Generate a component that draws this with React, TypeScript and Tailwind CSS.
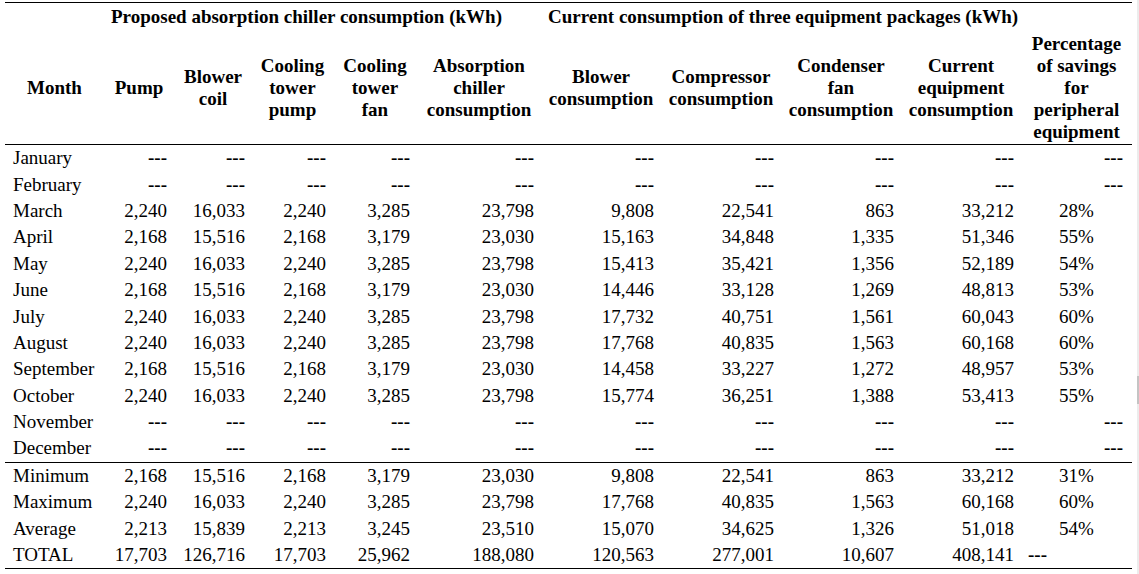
const cols = "grid grid-cols-[99px_70px_78px_81px_84px_124px_120px_120px_120px_120px_111px]";

type Row = { label: string; values: string[] | null };

const months: Row[] = [
  { label: "January", values: null },
  { label: "February", values: null },
  { label: "March", values: ["2,240", "16,033", "2,240", "3,285", "23,798", "9,808", "22,541", "863", "33,212", "28%"] },
  { label: "April", values: ["2,168", "15,516", "2,168", "3,179", "23,030", "15,163", "34,848", "1,335", "51,346", "55%"] },
  { label: "May", values: ["2,240", "16,033", "2,240", "3,285", "23,798", "15,413", "35,421", "1,356", "52,189", "54%"] },
  { label: "June", values: ["2,168", "15,516", "2,168", "3,179", "23,030", "14,446", "33,128", "1,269", "48,813", "53%"] },
  { label: "July", values: ["2,240", "16,033", "2,240", "3,285", "23,798", "17,732", "40,751", "1,561", "60,043", "60%"] },
  { label: "August", values: ["2,240", "16,033", "2,240", "3,285", "23,798", "17,768", "40,835", "1,563", "60,168", "60%"] },
  { label: "September", values: ["2,168", "15,516", "2,168", "3,179", "23,030", "14,458", "33,227", "1,272", "48,957", "53%"] },
  { label: "October", values: ["2,240", "16,033", "2,240", "3,285", "23,798", "15,774", "36,251", "1,388", "53,413", "55%"] },
  { label: "November", values: null },
  { label: "December", values: null }
];

const summary: Row[] = [
  { label: "Minimum", values: ["2,168", "15,516", "2,168", "3,179", "23,030", "9,808", "22,541", "863", "33,212", "31%"] },
  { label: "Maximum", values: ["2,240", "16,033", "2,240", "3,285", "23,798", "17,768", "40,835", "1,563", "60,168", "60%"] },
  { label: "Average", values: ["2,213", "15,839", "2,213", "3,245", "23,510", "15,070", "34,625", "1,326", "51,018", "54%"] },
  { label: "TOTAL", values: ["17,703", "126,716", "17,703", "25,962", "188,080", "120,563", "277,001", "10,607", "408,141", "---"] }
];

const headers = [
  ["Pump"],
  ["Blower", "coil"],
  ["Cooling", "tower", "pump"],
  ["Cooling", "tower", "fan"],
  ["Absorption", "chiller", "consumption"],
  ["Blower", "consumption"],
  ["Compressor", "consumption"],
  ["Condenser", "fan", "consumption"],
  ["Current", "equipment", "consumption"],
  ["Percentage", "of savings", "for", "peripheral", "equipment"]
];

function DataRow({ row }: { row: Row }) {
  return (
    <div className={`${cols} h-[26.4px] items-center`}>
      <div className="pl-[8px] whitespace-nowrap">{row.label}</div>
      {Array.from({ length: 10 }).map((_, i) => {
        const value = row.values?.[i];
        const isPct = i === 9;
        if (!value) {
          return (
            <div key={i} className={`text-right font-bold ${isPct ? "pr-[9px]" : "pr-[7px]"}`}>
              ---
            </div>
          );
        }
        if (isPct) {
          return value === "---" ? (
            <div key={i} className="pl-[7px] text-left font-bold">
              ---
            </div>
          ) : (
            <div key={i} className="text-center">
              {value}
            </div>
          );
        }
        return (
          <div key={i} className="pr-[7px] text-right">
            {value}
          </div>
        );
      })}
    </div>
  );
}

export default function App() {
  return (
    <div className="relative h-[574px] w-[1139px] overflow-hidden bg-white font-['Liberation_Serif',serif] text-[19px] text-black">
      <div className="ml-[5px] mt-[2px] w-[1127px] border-t border-black">
        <div className={`${cols} pt-[3px] font-bold leading-[22px]`}>
          <div />
          <div className="col-span-5 whitespace-nowrap pl-[7px]">Proposed absorption chiller consumption (kWh)</div>
          <div className="col-span-4 whitespace-nowrap pl-[7px]">Current consumption of three equipment packages (kWh)</div>
          <div />
        </div>
        <div className={`${cols} border-b border-black pb-[1px] pt-[5px] font-bold leading-[22px]`}>
          <div className="flex items-center justify-center">Month</div>
          {headers.map((lines, i) => (
            <div key={i} className="flex flex-col items-center justify-center text-center whitespace-nowrap">
              {lines.map((line) => (
                <span key={line}>{line}</span>
              ))}
            </div>
          ))}
        </div>
        <div className="border-b border-black leading-[22px]">
          {months.map((row) => (
            <DataRow key={row.label} row={row} />
          ))}
        </div>
        <div className="border-b border-black leading-[22px]">
          {summary.map((row) => (
            <DataRow key={row.label} row={row} />
          ))}
        </div>
      </div>
      <div className="absolute right-0 top-0 h-full w-[2px] bg-[#ececec]">
        <div className="mt-[376px] h-[28px] w-full bg-[#c4c4c4]" />
      </div>
    </div>
  );
}
